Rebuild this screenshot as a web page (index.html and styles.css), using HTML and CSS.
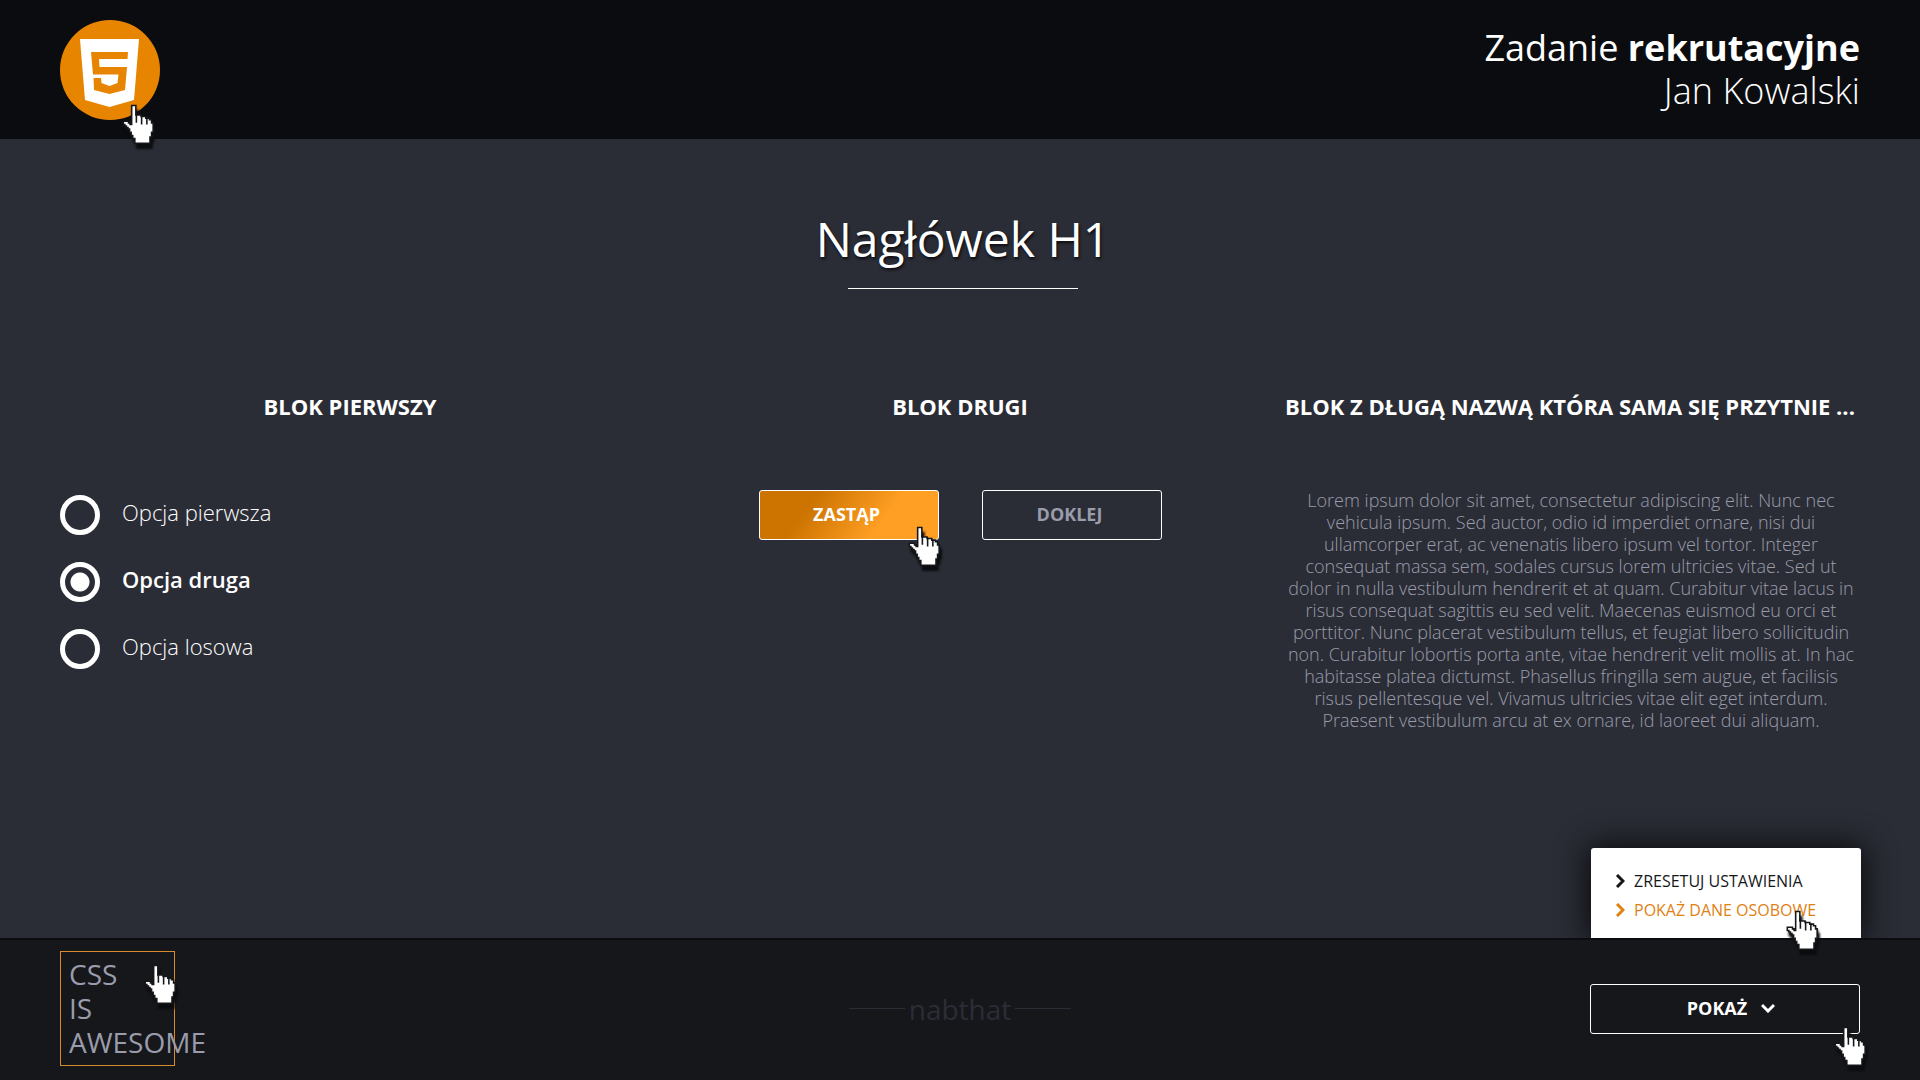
FILE: index.html
```html
<!DOCTYPE html>
<html lang="pl">
<head>
<meta charset="utf-8">
<title>Zadanie rekrutacyjne</title>
<meta name="viewport" content="width=device-width, initial-scale=1">
<link rel="stylesheet" href="styles.css">
</head>
<body>
<svg class="sprite" aria-hidden="true">
  <symbol id="hand" viewBox="0 0 32 42">
    <path d="M9 1.500H13V10.500H18V12H22.500V13.500H26V15H28V18H29.500V27H28V31.500H26.500V37.500H12V33H10V30H8.500V27H7V24H5.500V22.500H4V21H2.500V19.500H1V16.500H6V18H7.500V19.500H9Z" fill="#fff" stroke="#16171b" stroke-width="1.500"/>
    <path d="M13.500 9V18M18.500 11V19.500M23.500 13V19.500" stroke="#16171b" stroke-width="1.500" fill="none"/>
  </symbol>
</svg>

<header class="header">
  <a class="logo" href="#" aria-label="HTML5">
    <svg viewBox="0 0 100 100" aria-hidden="true">
      <circle cx="50" cy="50" r="50" fill="#e88500"/>
      <path d="M20 19H79L74 80L49.500 87L25 80Z" fill="#fff"/>
      <path d="M31 32H68L67.500 39H39L39.500 47H67L65 70L49.500 74L34 70L33.500 58H41L41.500 63L49.500 66L57.500 63L58.500 54.500H33Z" fill="#e88500"/>
    </svg>
    <svg class="hand hand--logo" aria-hidden="true"><use href="#hand"/></svg>
  </a>
  <p class="author">Zadanie <strong>rekrutacyjne</strong><br><span class="author__name">Jan Kowalski</span></p>
</header>

<main class="main">
  <h1 class="title">Nagłówek H1</h1>
  <div class="blocks">
    <section class="block">
      <h2 class="block__title">Blok pierwszy</h2>
      <div class="options">
        <label class="option"><input type="radio" name="opcja"><span>Opcja pierwsza</span></label>
        <label class="option"><input type="radio" name="opcja" checked><span>Opcja druga</span></label>
        <label class="option"><input type="radio" name="opcja"><span>Opcja losowa</span></label>
      </div>
    </section>
    <section class="block">
      <h2 class="block__title">Blok drugi</h2>
      <div class="actions">
        <button class="button button--active" type="button">Zastąp<svg class="hand hand--replace" aria-hidden="true"><use href="#hand"/></svg></button>
        <button class="button" type="button">Doklej</button>
      </div>
    </section>
    <section class="block">
      <h2 class="block__title">Blok z długą nazwą która sama się przytnie ...</h2>
      <p class="lorem">Lorem ipsum dolor sit amet, consectetur adipiscing elit. Nunc nec vehicula ipsum. Sed auctor, odio id imperdiet ornare, nisi dui ullamcorper erat, ac venenatis libero ipsum vel tortor. Integer consequat massa sem, sodales cursus lorem ultricies vitae. Sed ut dolor in nulla vestibulum hendrerit et at quam. Curabitur vitae lacus in risus consequat sagittis eu sed velit. Maecenas euismod eu orci et porttitor. Nunc placerat vestibulum tellus, et feugiat libero sollicitudin non. Curabitur lobortis porta ante, vitae hendrerit velit mollis at. In hac habitasse platea dictumst. Phasellus fringilla sem augue, et facilisis risus pellentesque vel. Vivamus ultricies vitae elit eget interdum. Praesent vestibulum arcu at ex ornare, id laoreet dui aliquam.</p>
    </section>
  </div>
</main>

<footer class="footer">
  <div class="awesome">CSS<br>IS<br>AWESOME<svg class="hand hand--awesome" aria-hidden="true"><use href="#hand"/></svg></div>
  <p class="brand">nabthat</p>
  <div class="more">
    <button class="button button--wide" type="button">Pokaż
      <svg class="chevron" viewBox="0 0 14 10" aria-hidden="true"><path d="M1 2L7 8L13 2"/></svg>
      <svg class="hand hand--more" aria-hidden="true"><use href="#hand"/></svg>
    </button>
  </div>
  <div class="menu-clip">
    <nav class="menu">
      <a class="menu__item" href="#"><svg viewBox="0 0 10 14" aria-hidden="true"><path d="M2 1L8 7L2 13"/></svg>Zresetuj ustawienia</a>
      <a class="menu__item menu__item--active" href="#"><svg viewBox="0 0 10 14" aria-hidden="true"><path d="M2 1L8 7L2 13"/></svg>Pokaż dane osobowe</a>
    </nav>
  </div>
  <svg class="hand hand--menu" aria-hidden="true"><use href="#hand"/></svg>
</footer>
</body>
</html>
```
FILE: styles.css
```css
* {
  box-sizing: border-box;
}

body {
  margin: 0;
  min-height: 100vh;
  display: flex;
  flex-direction: column;
  background: #2b2d36;
  color: #fff;
  font-family: "Open Sans", sans-serif;
  font-size: 18px;
  line-height: 22px;
}

h1,
h2,
p {
  margin: 0;
}

.sprite {
  display: none;
}

/* Header */
.header {
  display: flex;
  justify-content: space-between;
  align-items: flex-start;
  padding: 20px 60px 19px;
  background: #0b0c0f;
}

.logo {
  position: relative;
  width: 100px;
  height: 100px;
}

.logo > svg:first-child {
  display: block;
  width: 100%;
  height: 100%;
}

.author {
  padding-top: 6px;
  font-size: 36px;
  line-height: 43px;
  text-align: right;
}

.author__name {
  font-weight: 300;
}

/* Main content */
.main {
  flex: 1;
  padding: 70px 60px;
}

.title {
  width: max-content;
  margin: 0 auto;
  padding-left: 6px;
  font-size: 48px;
  font-weight: 400;
  line-height: 60px;
  text-shadow: 1px 2px 3px #0b0c0f;
}

.title::after {
  content: "";
  display: block;
  width: 230px;
  height: 1px;
  margin: 19px auto 0;
  background: #fff;
}

.blocks {
  display: grid;
  grid-template-columns: repeat(3, minmax(0, 1fr));
  gap: 30px;
  margin-top: 102px;
}

.block__title {
  overflow: hidden;
  font-size: 22px;
  font-weight: 700;
  line-height: 30px;
  text-align: center;
  text-overflow: ellipsis;
  text-transform: uppercase;
  white-space: nowrap;
}

.options {
  display: grid;
  gap: 27px;
  margin-top: 74px;
}

.option {
  display: flex;
  align-items: center;
  gap: 22px;
  width: max-content;
  font-size: 22px;
  font-weight: 300;
  line-height: 34px;
}

.option span {
  padding-bottom: 6px;
}

.option input {
  appearance: none;
  width: 40px;
  height: 40px;
  margin: 0;
  border: 5px solid #fff;
  border-radius: 50%;
}

.option input:checked {
  background: radial-gradient(circle, #fff 9px, transparent 10px);
}

.option input:checked + span {
  font-weight: 600;
}

.actions {
  display: flex;
  justify-content: center;
  gap: 43px;
  margin-top: 69px;
}

.button {
  position: relative;
  display: flex;
  justify-content: center;
  align-items: center;
  gap: 14px;
  width: 180px;
  height: 50px;
  padding: 0 4px 2px 0;
  border: 1px solid #fff;
  border-radius: 3px;
  background: transparent;
  color: #9a9cab;
  font: 700 18px/22px "Open Sans", sans-serif;
  text-transform: uppercase;
}

.button--active {
  background: linear-gradient(127deg, #cc7300 28%, #ff9f24 68%);
  color: #fff;
}

.button--wide {
  width: 270px;
  padding: 0 0 2px 12px;
  color: #fff;
}

.lorem {
  margin-top: 68px;
  padding: 0 4px 0 6px;
  color: #9a9cab;
  font-weight: 300;
  text-align: center;
}

/* Footer */
.footer {
  position: relative;
  display: grid;
  grid-template-columns: 1fr auto 1fr;
  align-items: center;
  padding: 11px 60px 14px;
  border-top: 2px solid #0b0c0f;
  background: #16171b;
}

.awesome {
  position: relative;
  width: 115px;
  height: 115px;
  padding: 5px 8px;
  border: 1px solid #d98a2b;
  color: #9a9cab;
  font-size: 28px;
  line-height: 34px;
}

.brand {
  display: flex;
  align-items: center;
  gap: 4px;
  color: #2b2d36;
  font-size: 28px;
  line-height: 34px;
}

.brand::before,
.brand::after {
  content: "";
  width: 56px;
  height: 1px;
  background: #2b2d36;
}

.more {
  display: flex;
  justify-content: flex-end;
}

.chevron {
  width: 14px;
  height: 10px;
  fill: none;
  stroke: #fff;
  stroke-width: 3;
}

/* Menu sits on top of the footer; the wrapper cuts its shadow at the footer edge */
.menu-clip {
  position: absolute;
  right: 19px;
  bottom: 100%;
  margin-bottom: 2px;
  padding: 40px 40px 0;
  overflow: hidden;
}

.menu {
  display: grid;
  gap: 7px;
  width: 270px;
  padding: 22px 24px 17px;
  border-radius: 3px 3px 0 0;
  background: #fff;
  box-shadow: 0 0 30px 4px #0b0c0f;
}

.menu__item {
  display: flex;
  align-items: center;
  gap: 9px;
  color: #16171b;
  font-size: 16px;
  font-weight: 500;
  text-decoration: none;
  text-transform: uppercase;
  white-space: nowrap;
}

.menu__item svg {
  width: 10px;
  height: 14px;
  fill: none;
  stroke: currentColor;
  stroke-width: 3;
}

.menu__item--active {
  color: #e08114;
}

/* Hand pointers */
.hand {
  position: absolute;
  width: 34px;
  height: 44px;
  filter: drop-shadow(2px 5px 1px #0b0c0f);
}

.hand--logo {
  left: 62px;
  top: 84px;
}

.hand--replace {
  left: 148px;
  top: 35px;
}

.hand--awesome {
  left: 83px;
  top: 12px;
}

.hand--more {
  right: -9px;
  top: 41px;
}

.hand--menu {
  right: 100px;
  top: -30px;
}
```
